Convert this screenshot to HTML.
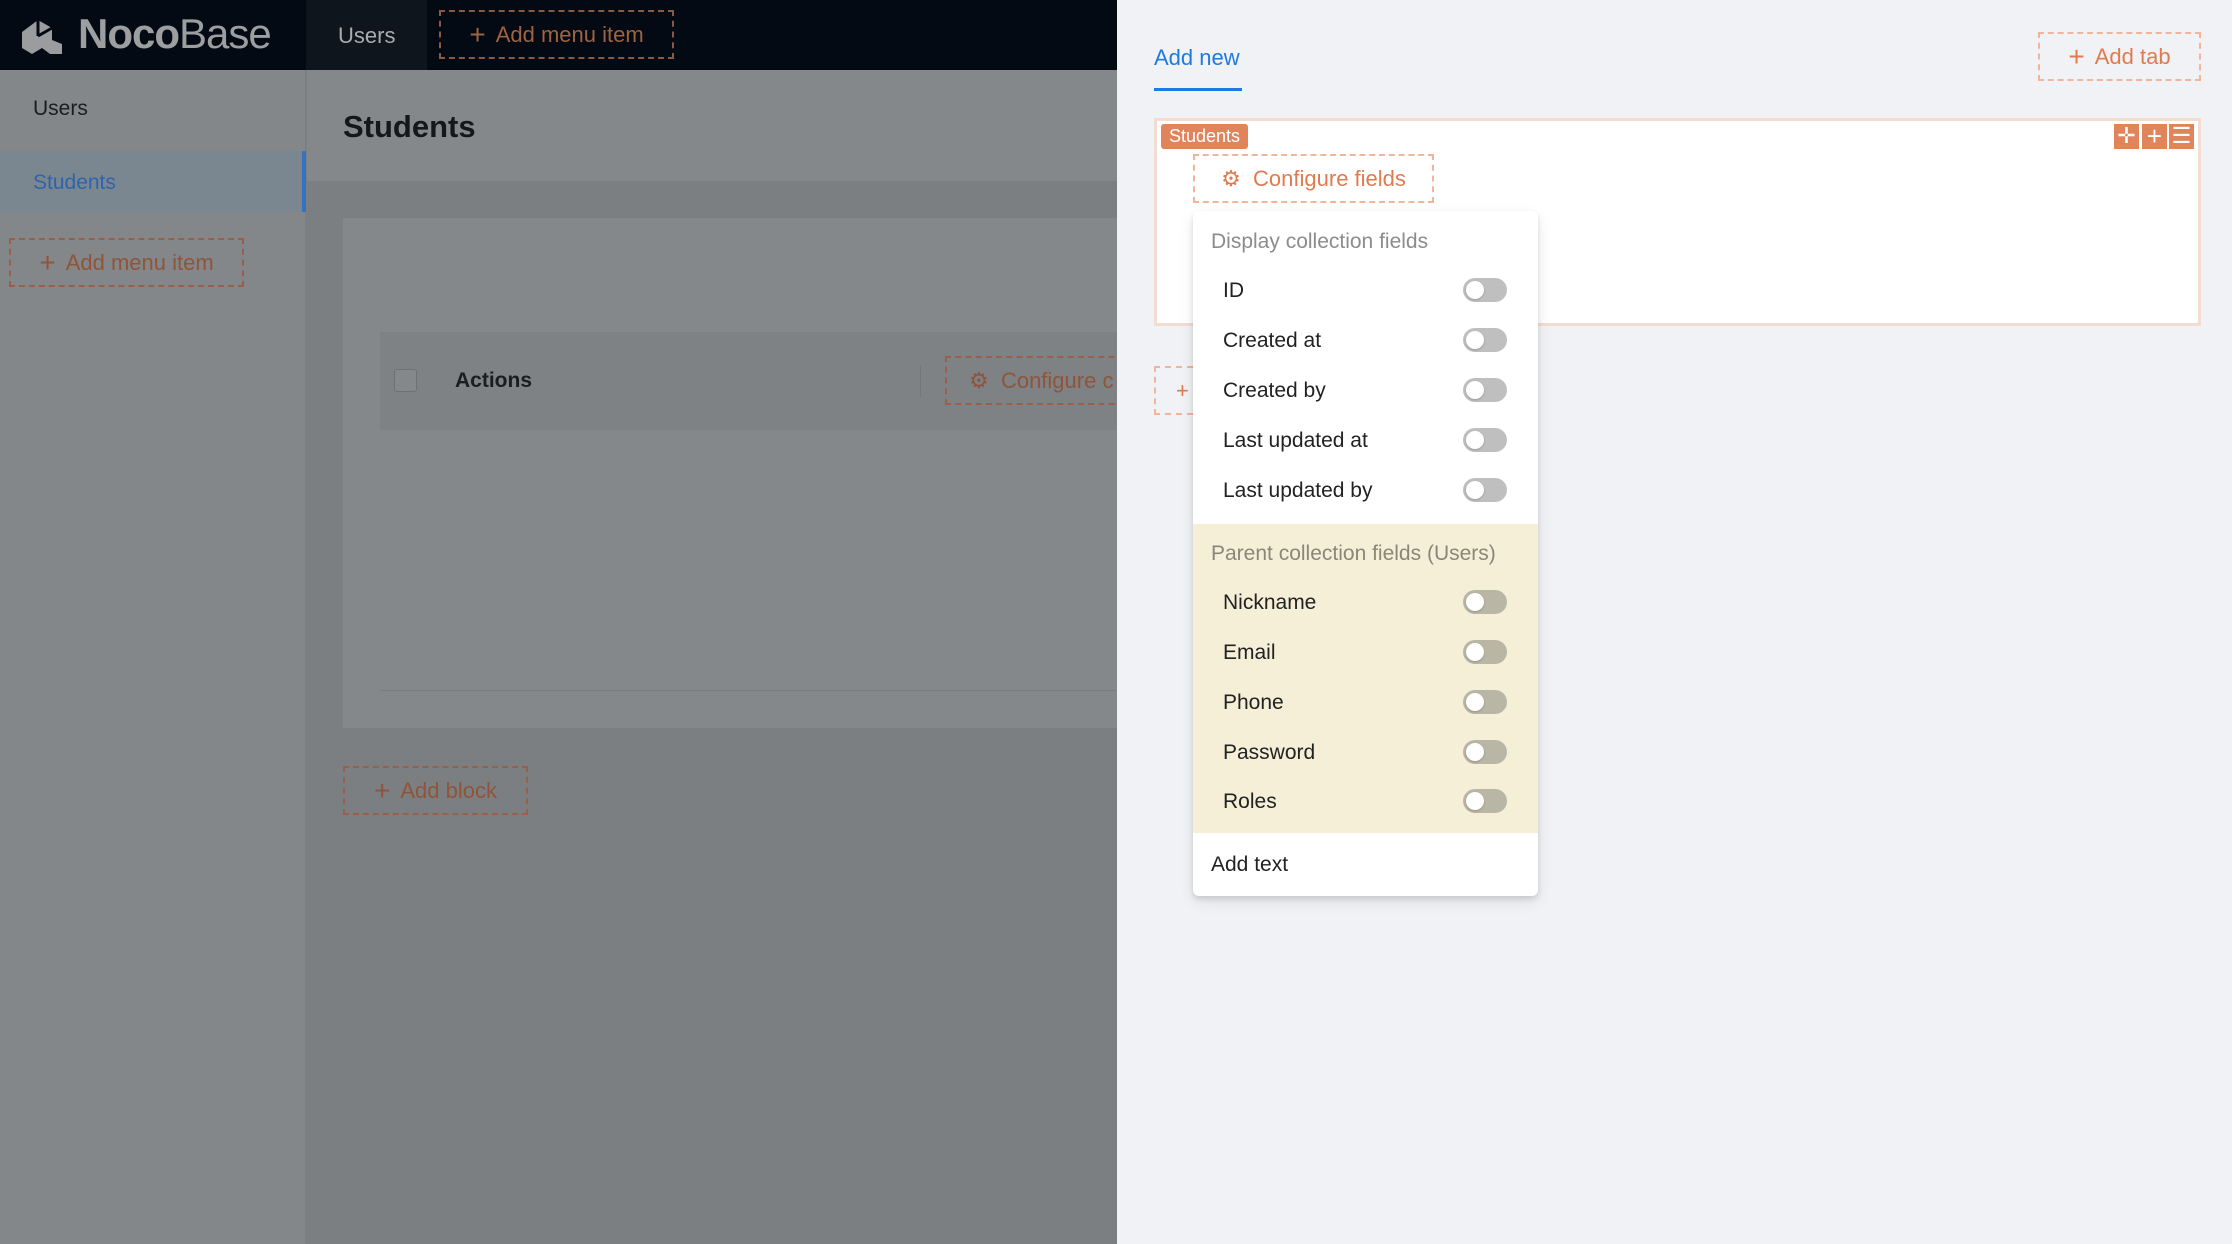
<!DOCTYPE html>
<html><head><meta charset="utf-8"><style>
*{box-sizing:border-box;margin:0;padding:0}
body{width:2232px;height:1244px;position:relative;overflow:hidden;font-family:"Liberation Sans",sans-serif;background:#7c7f82}
.a{position:absolute}
.dash{position:absolute;border:2px dashed;display:flex;align-items:center;justify-content:center;font-size:22px}
.tg{position:absolute;left:270px;width:44px;height:24px;border-radius:12px;background:#bfbfbf;top:-12px}
.tg::after{content:"";position:absolute;left:3px;top:3px;width:18px;height:18px;border-radius:50%;background:#fff;box-shadow:0 1px 2px rgba(0,0,0,.2)}
.row{position:absolute;left:0;width:344px;height:0}
.row span{position:absolute;left:30px;top:-11px;font-size:21px;color:#222}
</style></head><body>
<div class="a" style="left:0;top:0;width:1117px;height:70px;background:#030a13"></div>
<div class="a" style="left:306px;top:0;width:121px;height:70px;background:#0e151d"></div>
<svg class="a" style="left:18px;top:14px" width="48" height="42" viewBox="0 0 48 42"><path d="M4 18 L20 6 L34 14 L34 26 L44 30 L44 40 L32 40 L24 34 L14 40 L4 34 Z" fill="#9a9c9e"/><path d="M20 6 L20 22 M20 22 L34 14" stroke="#030a13" stroke-width="3" fill="none"/></svg>
<div class="a" style="left:78px;top:10px;font-size:42px;color:#9c9ea0;letter-spacing:-1px"><b>Noco</b><span style="font-weight:normal;-webkit-text-stroke:0">Base</span></div>
<div class="a" style="left:338px;top:23px;font-size:22px;color:#a9acaf">Users</div>
<div class="dash" style="left:439px;top:10px;width:235px;height:49px;border-color:#8a5a40;color:#a0623f"><span style="font-size:28px;margin-right:10px;font-weight:300">+</span>Add menu item</div>
<div class="a" style="left:0;top:70px;width:306px;height:1174px;background:#84878a;border-right:1px solid #7c7f82"></div>
<div class="a" style="left:33px;top:97px;font-size:21px;color:#1b1d20">Users</div>
<div class="a" style="left:0;top:151px;width:306px;height:61px;background:#7a8791;border-right:4px solid #3672c2"></div>
<div class="a" style="left:33px;top:171px;font-size:21px;color:#2f64ab">Students</div>
<div class="dash" style="left:9px;top:238px;width:235px;height:49px;border-color:#98604a;color:#8f5439"><span style="font-size:28px;margin-right:10px;font-weight:300">+</span>Add menu item</div>
<div class="a" style="left:307px;top:70px;width:810px;height:111px;background:#85888b"></div>
<div class="a" style="left:343px;top:109px;font-size:31px;font-weight:bold;color:#151719">Students</div>
<div class="a" style="left:343px;top:218px;width:774px;height:510px;background:#85888b"></div>
<div class="a" style="left:380px;top:332px;width:737px;height:98px;background:#7f8285"></div>
<div class="a" style="left:394px;top:369px;width:23px;height:23px;border:1px solid #6e7073;border-radius:3px;background:#85888b"></div>
<div class="a" style="left:455px;top:369px;font-size:21px;font-weight:bold;color:#1b1d20">Actions</div>
<div class="a" style="left:920px;top:365px;width:1px;height:32px;background:#74777a"></div>
<div class="dash" style="left:945px;top:356px;width:190px;height:49px;border-color:#98604a;color:#8f5439;justify-content:flex-start;padding-left:22px">⚙&nbsp;&nbsp;Configure c</div>
<div class="a" style="left:380px;top:690px;width:737px;height:1px;background:#7a7d80"></div>
<div class="dash" style="left:343px;top:766px;width:185px;height:49px;border-color:#98604a;color:#8f5439"><span style="font-size:28px;margin-right:10px;font-weight:300">+</span>Add block</div>
<div class="a" style="left:1117px;top:0;width:1115px;height:1244px;background:#f0f2f5"></div>
<div class="a" style="left:1154px;top:45px;font-size:22px;color:#1f7ae0">Add new</div>
<div class="a" style="left:1154px;top:88px;width:88px;height:3px;background:#1f7ae0"></div>
<div class="dash" style="left:2038px;top:32px;width:163px;height:49px;border-color:#efb69c;color:#e07b4f"><span style="font-size:28px;margin-right:10px;font-weight:300">+</span>Add tab</div>
<div class="a" style="left:1154px;top:118px;width:1047px;height:208px;background:#fff;border:3px solid #f3dcd1"></div>
<div class="a" style="left:1161px;top:124px;width:87px;height:25px;background:#e0845c;border-radius:3px;color:#fff;font-size:18px;line-height:25px;text-align:center">Students</div>
<div class="a" style="left:2114px;top:124px;width:25px;height:25px;background:#e0845c;color:#fff;font-size:22px;line-height:24px;text-align:center">✛</div>
<div class="a" style="left:2142px;top:124px;width:25px;height:25px;background:#e0845c;color:#fff;font-size:26px;line-height:24px;text-align:center">+</div>
<div class="a" style="left:2169px;top:124px;width:25px;height:25px;background:#e0845c;color:#fff;font-size:22px;line-height:24px;text-align:center">☰</div>
<div class="dash" style="left:1193px;top:154px;width:241px;height:49px;border-color:#efb69c;color:#e07b4f;background:#fff">⚙&nbsp;&nbsp;Configure fields</div>
<div class="dash" style="left:1154px;top:366px;width:50px;height:49px;border-color:#efb69c;color:#e07b4f;justify-content:flex-start;padding-left:20px">+</div>
<div class="a" style="left:1193px;top:211px;width:345px;height:685px;background:#fff;border-radius:6px;box-shadow:0 6px 16px rgba(0,0,0,.08),0 3px 6px rgba(0,0,0,.12)">
<div class="a" style="left:18px;top:19px;font-size:21px;color:#8c8c8c">Display collection fields</div>
<div class="row" style="top:79px"><span>ID</span><i class="tg"></i></div>
<div class="row" style="top:129px"><span>Created at</span><i class="tg"></i></div>
<div class="row" style="top:179px"><span>Created by</span><i class="tg"></i></div>
<div class="row" style="top:229px"><span>Last updated at</span><i class="tg"></i></div>
<div class="row" style="top:279px"><span>Last updated by</span><i class="tg"></i></div>
<div class="a" style="left:0;top:313px;width:345px;height:309px;background:#f6efd8"></div>
<div class="a" style="left:18px;top:331px;font-size:21px;color:#8a8778">Parent collection fields (Users)</div>
<div class="row" style="top:391px"><span>Nickname</span><i class="tg" style="background:#b9b6a6"></i></div>
<div class="row" style="top:441px"><span>Email</span><i class="tg" style="background:#b9b6a6"></i></div>
<div class="row" style="top:491px"><span>Phone</span><i class="tg" style="background:#b9b6a6"></i></div>
<div class="row" style="top:541px"><span>Password</span><i class="tg" style="background:#b9b6a6"></i></div>
<div class="row" style="top:590px"><span>Roles</span><i class="tg" style="background:#b9b6a6"></i></div>
<div class="a" style="left:18px;top:642px;font-size:21px;color:#222">Add text</div>
</div>
</body></html>
